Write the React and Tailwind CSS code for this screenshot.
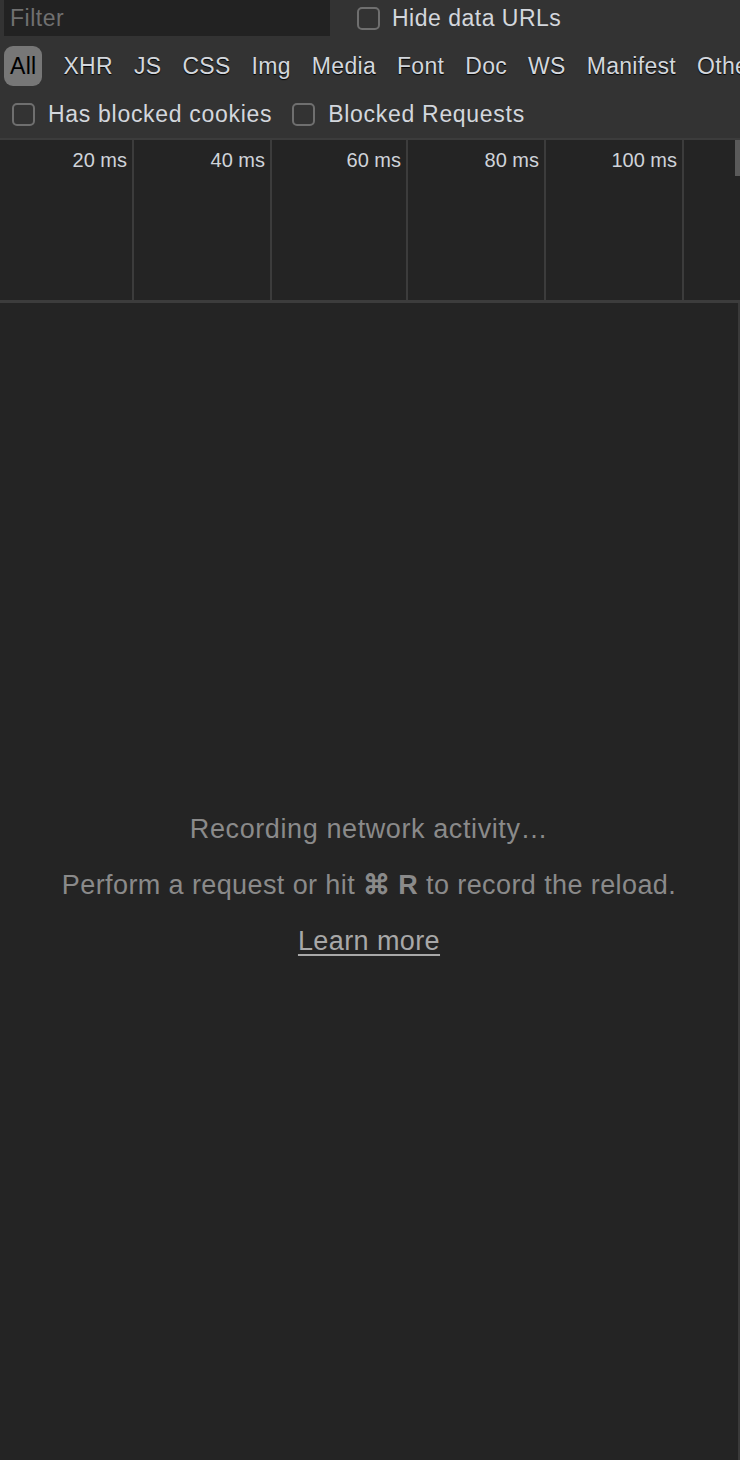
import React from 'react';

const types = ['All', 'XHR', 'JS', 'CSS', 'Img', 'Media', 'Font', 'Doc', 'WS', 'Manifest', 'Other'];

const ticks = [
  { label: '20 ms', w: 'w-[134px]' },
  { label: '40 ms', w: 'w-[138px]' },
  { label: '60 ms', w: 'w-[136px]' },
  { label: '80 ms', w: 'w-[138px]' },
  { label: '100 ms', w: 'w-[138px]' },
];

const Checkbox = () => (
  <span className="inline-block w-[23px] h-[23px] rounded-[5px] border-2 border-[#6f6f6f] shrink-0" />
);

const App = () => {
  return (
    <div className="h-[1460px] w-full flex flex-col bg-[#242424] overflow-hidden font-['Liberation_Sans',Arial,sans-serif]">
      {/* Toolbar */}
      <div className="bg-[#333333] h-[138px] shrink-0 flex flex-col text-[23px] tracking-[0.5px]">
        <div className="flex items-center h-[40px]">
          <div className="ml-[4px] w-[326px] h-[36px] self-start bg-[#222222] flex items-center px-[6px]">
            <span className="text-[#707070]">Filter</span>
          </div>
          <div className="ml-[27px] flex items-center gap-[12px] -mt-[4px]">
            <Checkbox />
            <span className="text-[#d3d7dd]">Hide data URLs</span>
          </div>
        </div>
        <div className="flex items-center gap-[9px] mt-[6px] pl-[4px] whitespace-nowrap tracking-[0.3px]">
          {types.map((t, i) => (
            <span
              key={t}
              className={`h-[40px] flex items-center px-[6px] rounded-[9px] ${
                i === 0
                  ? 'bg-[#777777] text-black mr-[6px]'
                  : 'text-[#d3d7dd] [text-shadow:0_1px_1px_#000]'
              }`}
            >
              {t}
            </span>
          ))}
        </div>
        <div className="flex items-center mt-[11px] pl-[12px] whitespace-nowrap tracking-[0.7px]">
          <Checkbox />
          <span className="ml-[13px] text-[#d3d7dd]">Has blocked cookies</span>
          <span className="ml-[20px] flex"><Checkbox /></span>
          <span className="ml-[13px] text-[#d3d7dd]">Blocked Requests</span>
        </div>
      </div>

      {/* Timeline overview */}
      <div className="relative h-[165px] shrink-0 border-t-2 border-b-[3px] border-[#3c3c3c] flex">
        {ticks.map((t) => (
          <div key={t.label} className={`${t.w} shrink-0 border-r-2 border-[#3c3c3c] flex justify-end pr-[5px] pt-[7px]`}>
            <span className="text-[20px] leading-[26px] text-[#cfd3d9]">{t.label}</span>
          </div>
        ))}
        <div className="flex-1" />
        <div className="absolute right-0 top-0 w-[5px] h-[36px] bg-[#5a5a5a]" />
      </div>

      {/* Empty state */}
      <div className="flex-1 border-r-2 border-[#3a3a3a] flex flex-col items-center justify-center gap-[20px] pt-[6px] text-[27px] tracking-[0.4px] leading-[36px] text-[#8a8a8a]">
        <p className="tracking-[0.6px]">Recording network activity…</p>
        <p>
          Perform a request or hit <span className="font-bold">⌘ R</span> to record the reload.
        </p>
        <a href="#" className="underline underline-offset-[4px] text-[#a8a8a8]">Learn more</a>
      </div>
    </div>
  );
};

export default App;
